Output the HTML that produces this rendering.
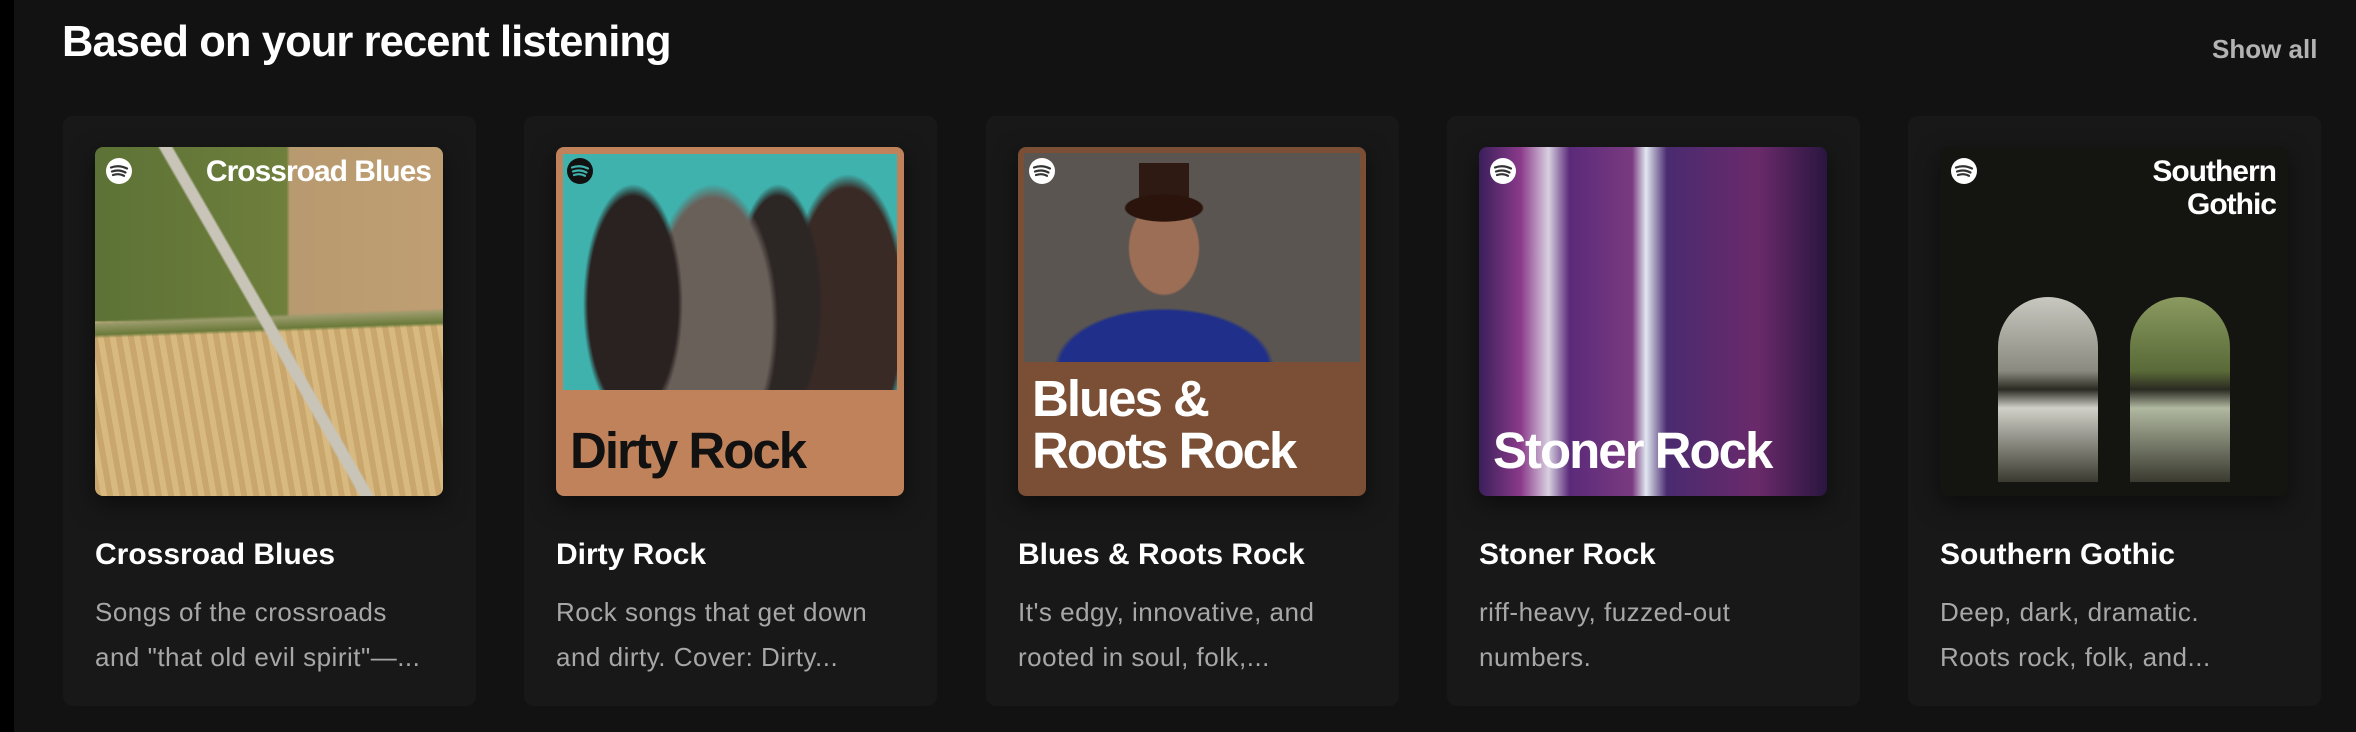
<!DOCTYPE html>
<html><head><meta charset="utf-8"><style>
*{margin:0;padding:0;box-sizing:border-box}
body{width:2356px;height:732px;background:#121212;position:relative;overflow:hidden;font-family:"Liberation Sans",sans-serif}
.strip{position:absolute;left:0;top:0;width:14px;height:732px;background:#000}
h1{position:absolute;left:62px;top:18px;font-size:43.5px;font-weight:bold;color:#fff;letter-spacing:-0.9px}
.show{position:absolute;left:2212px;top:34px;font-size:26px;font-weight:bold;color:#b3b3b3}
.card{position:absolute;top:116px;width:413px;height:590px;background:#181818;border-radius:10px}
.img{position:absolute;left:32px;top:31px;width:348px;height:349px;border-radius:8px;overflow:hidden;box-shadow:0 8px 24px rgba(0,0,0,.5)}
.t{position:absolute;left:32px;top:422px;font-size:30px;font-weight:bold;color:#fff}
.d{position:absolute;left:32px;top:474px;width:345px;font-size:26px;line-height:45px;color:#a7a7a7;letter-spacing:0.5px;white-space:nowrap}
.logo{position:absolute;left:10px;top:10px;width:28px;height:28px}
.big{position:absolute;left:14px;font-weight:bold;font-size:51px;letter-spacing:-2px;line-height:52px}
</style></head><body>
<div class="strip"></div>
<h1>Based on your recent listening</h1>
<div class="show">Show all</div>

<div class="card" style="left:63px">
 <div class="img" style="background:
  linear-gradient(60deg,transparent 48%,#c9c4b8 48.5%,#c9c4b8 50.5%,transparent 51%),
  linear-gradient(178deg,transparent 48%,#9a9a6a 49%,#6a7a3a 52%,transparent 53%),
  linear-gradient(90deg,#5c7236 0,#6f7f3c 55%,#b89a70 56%,#bf9e72 100%) top/100% 50% no-repeat,
  repeating-linear-gradient(80deg,#c8a66c 0 6px,#d8b97f 6px 12px)">
  <svg class="logo" viewBox="0 0 28 28"><circle cx="14" cy="14" r="13" fill="#fff"/><path d="M6 10.5q8-3 16 1M7 14.5q7-2.5 13.5 1M8 18q6-2 11 .8" stroke="#333" stroke-width="2.2" fill="none" stroke-linecap="round"/></svg>
  <div style="position:absolute;right:12px;top:8px;color:#fff;font-weight:bold;font-size:30px;letter-spacing:-1px">Crossroad Blues</div>
 </div>
 <div class="t">Crossroad Blues</div>
 <div class="d">Songs of the crossroads<br>and "that old evil spirit"—...</div>
</div>

<div class="card" style="left:524px">
 <div class="img" style="background:#c0825a">
  <div style="position:absolute;left:7px;top:7px;width:334px;height:236px;background:
   radial-gradient(ellipse 50px 120px at 70px 150px,#2a2220 90%,transparent 100%),
   radial-gradient(ellipse 65px 140px at 150px 170px,#6a605a 90%,transparent 100%),
   radial-gradient(ellipse 45px 120px at 215px 150px,#2c2624 90%,transparent 100%),
   radial-gradient(ellipse 60px 140px at 285px 160px,#3a2a26 90%,transparent 100%),
   #3fb2ae"></div>
  <svg class="logo" viewBox="0 0 28 28"><circle cx="14" cy="14" r="13" fill="#111"/><path d="M6 10.5q8-3 16 1M7 14.5q7-2.5 13.5 1M8 18q6-2 11 .8" stroke="#3fb2ae" stroke-width="2.2" fill="none" stroke-linecap="round"/></svg>
  <div class="big" style="top:278px;color:#111">Dirty Rock</div>
 </div>
 <div class="t">Dirty Rock</div>
 <div class="d">Rock songs that get down<br>and dirty. Cover: Dirty...</div>
</div>

<div class="card" style="left:986px">
 <div class="img" style="background:#7b4f35">
  <div style="position:absolute;left:6px;top:6px;width:336px;height:209px;background:
   radial-gradient(ellipse 40px 14px at 140px 55px,#2a140c 95%,transparent 100%),
   linear-gradient(#2e1a12,#2e1a12) 115px 10px/50px 45px no-repeat,
   radial-gradient(ellipse 36px 48px at 140px 95px,#9c6e55 95%,transparent 100%),
   radial-gradient(ellipse 110px 60px at 140px 215px,#1f2f8a 95%,transparent 100%),
   #5a5551"></div>
  <svg class="logo" viewBox="0 0 28 28"><circle cx="14" cy="14" r="13" fill="#fff"/><path d="M6 10.5q8-3 16 1M7 14.5q7-2.5 13.5 1M8 18q6-2 11 .8" stroke="#333" stroke-width="2.2" fill="none" stroke-linecap="round"/></svg>
  <div class="big" style="top:226px;color:#fff">Blues &amp;<br>Roots Rock</div>
 </div>
 <div class="t">Blues &amp; Roots Rock</div>
 <div class="d">It's edgy, innovative, and<br>rooted in soul, folk,...</div>
</div>

<div class="card" style="left:1447px">
 <div class="img" style="background:
  linear-gradient(90deg,#3a1f5a 0,#8a3a8a 12%,#d8d0e0 20%,#5a2a7a 26%,#7a3a80 44%,#e0e8f0 48%,#4a2a70 54%,#6a2a6a 80%,#2a1640 100%)">
  <svg class="logo" viewBox="0 0 28 28"><circle cx="14" cy="14" r="13" fill="#fff"/><path d="M6 10.5q8-3 16 1M7 14.5q7-2.5 13.5 1M8 18q6-2 11 .8" stroke="#333" stroke-width="2.2" fill="none" stroke-linecap="round"/></svg>
  <div class="big" style="top:278px;color:#fff">Stoner Rock</div>
 </div>
 <div class="t">Stoner Rock</div>
 <div class="d">riff-heavy, fuzzed-out<br>numbers.</div>
</div>

<div class="card" style="left:1908px">
 <div class="img" style="background:#141510">
  <div style="position:absolute;left:58px;top:150px;width:100px;height:185px;border-radius:50px 50px 0 0;background:linear-gradient(#c8c8c0,#8a8a80 40%,#2a2a22 50%,#d0d0c8 60%,#3a3a30)"></div>
  <div style="position:absolute;left:190px;top:150px;width:100px;height:185px;border-radius:50px 50px 0 0;background:linear-gradient(#8a9a60,#5a6a38 40%,#2a2a22 50%,#b0b8a0 60%,#3a3a30)"></div>
  <svg class="logo" viewBox="0 0 28 28"><circle cx="14" cy="14" r="13" fill="#fff"/><path d="M6 10.5q8-3 16 1M7 14.5q7-2.5 13.5 1M8 18q6-2 11 .8" stroke="#333" stroke-width="2.2" fill="none" stroke-linecap="round"/></svg>
  <div style="position:absolute;right:12px;top:8px;color:#fff;font-weight:bold;font-size:30px;line-height:33px;text-align:right;letter-spacing:-1px">Southern<br>Gothic</div>
 </div>
 <div class="t">Southern Gothic</div>
 <div class="d">Deep, dark, dramatic.<br>Roots rock, folk, and...</div>
</div>
</body></html>
